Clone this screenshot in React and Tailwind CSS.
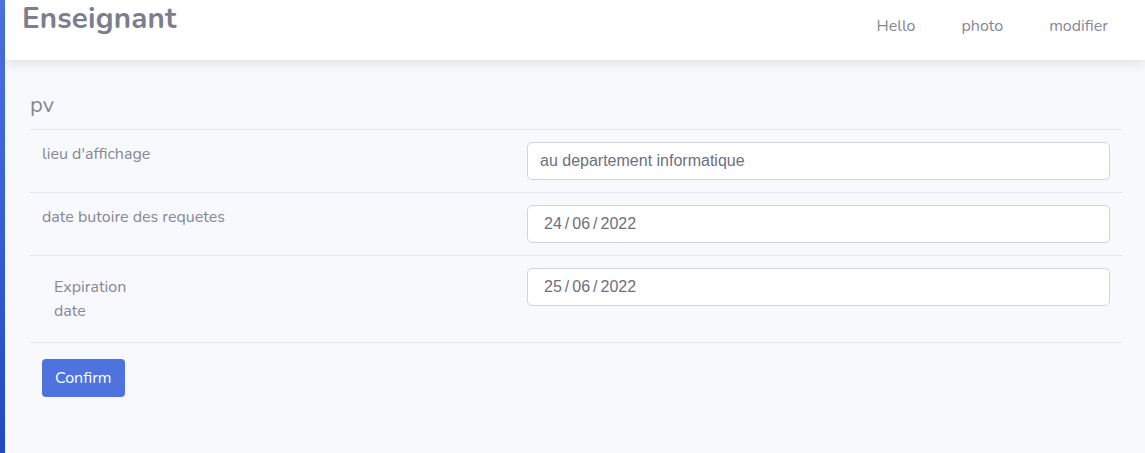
export default function App() {
  const rows = [
    { label: "lieu d'affichage", value: 'au departement informatique' },
    { label: 'date butoire des requetes', date: ['24', '06', '2022'] },
  ];

  const DateText = ({ parts }) => (
    <span>
      {parts[0]}
      <span className="mx-[3px]">/</span>
      {parts[1]}
      <span className="mx-[3px]">/</span>
      {parts[2]}
    </span>
  );

  return (
    <div className="flex min-h-[453px] bg-[#f8f9fc] font-['Nunito','Lato',sans-serif] text-[#858796]">
      {/* left accent strip */}
      <div className="w-[5px] shrink-0 bg-gradient-to-b from-[#4e73df] to-[#224abe]" />

      <div className="flex-1 flex flex-col">
        {/* top bar */}
        <header className="h-[60px] bg-white shadow-[0_2px_12px_rgba(58,59,69,0.15)] flex items-start justify-between pl-[17px] pr-[37px] relative z-10">
          <h1 className="text-[29.5px] leading-[36px] font-bold text-[#7c7e8e] tracking-[0.2px]">Enseignant</h1>
          <nav className="flex gap-[46px] pt-[15px] text-[16px] leading-[22px]">
            <span>Hello</span>
            <span>photo</span>
            <span>modifier</span>
          </nav>
        </header>

        {/* form */}
        <main className="pl-[25px] pr-[23px] pt-[30px]">
          <h2 className="text-[22px] leading-[30px] pb-[9px] border-b border-[#e3e6f0]">pv</h2>

          {rows.map((r) => (
            <div key={r.label} className="flex border-b border-[#e3e6f0] h-[63px]">
              <div className="w-[485px] shrink-0 pl-[12px] pt-[12px] text-[16px] leading-[24px]">{r.label}</div>
              <div className="flex-1 px-[12px] pt-[12px]">
                <div
                  className={`h-[38px] bg-white border border-[#d1d3e2] rounded-[5px] flex items-center text-[16px] text-[#6e707e] font-['Liberation_Sans',sans-serif] ${
                    r.date ? 'pl-[16px]' : 'pl-[12px]'
                  }`}
                >
                  {r.date ? <DateText parts={r.date} /> : r.value}
                </div>
              </div>
            </div>
          ))}

          <div className="flex border-b border-[#e3e6f0] h-[87px]">
            <div className="w-[485px] shrink-0 pl-[24px] pt-[19px] text-[16px] leading-[24px]">
              Expiration
              <br />
              date
            </div>
            <div className="flex-1 px-[12px] pt-[12px]">
              <div className="h-[38px] bg-white border border-[#d1d3e2] rounded-[5px] flex items-center pl-[16px] text-[16px] text-[#6e707e] font-['Liberation_Sans',sans-serif]">
                <DateText parts={['25', '06', '2022']} />
              </div>
            </div>
          </div>

          <div className="pl-[12px] pt-[16px]">
            <button className="h-[38px] px-[13px] rounded-[4px] bg-[#4e73df] text-white text-[16px]">Confirm</button>
          </div>
        </main>
      </div>
    </div>
  );
}
